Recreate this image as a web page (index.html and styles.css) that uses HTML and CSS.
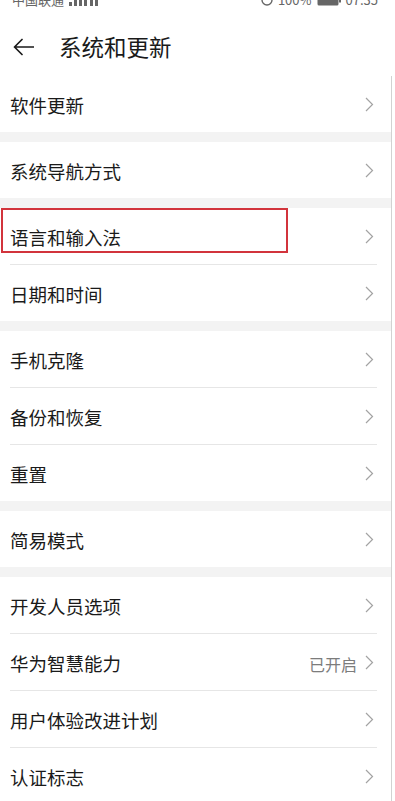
FILE: index.html
```html
<!DOCTYPE html>
<html lang="zh-CN">
<head>
<meta charset="utf-8">
<title>系统和更新</title>
<link rel="stylesheet" href="styles.css">
</head>
<body>
<div class="status">
  <div class="status-inner">
    <span class="carrier">中国联通
      <svg class="sig" width="30" height="12" viewBox="0 0 30 12"><rect x="0" y="8" width="3" height="4"/><rect x="5" y="6" width="3" height="6"/><rect x="10" y="3" width="3" height="9"/><rect x="15" y="0" width="3" height="12"/><rect x="21" y="4" width="3" height="8"/><rect x="26" y="2" width="3" height="10"/></svg>
    </span>
    <span class="sys">
      <svg class="alarm" width="12" height="12" viewBox="0 0 12 12"><circle cx="6" cy="6" r="5" fill="none" stroke="#666" stroke-width="1.4"/></svg>
      <span>100%</span>
      <svg class="batt" width="24" height="11" viewBox="0 0 24 11"><rect x="0.5" y="0.5" width="21" height="10" rx="1.5" fill="#666"/><rect x="22" y="3.5" width="2" height="4" fill="#666"/></svg>
      <span>07:35</span>
    </span>
  </div>
</div>

<header class="top">
  <svg class="back" width="21" height="18" viewBox="0 0 21 18"><path d="M9 1.5 L1.5 9 L9 16.5 M1.5 9 H20.5" fill="none" stroke="#1a1a1a" stroke-width="1.7" stroke-linecap="round" stroke-linejoin="round"/></svg>
  <h1 class="title">系统和更新</h1>
</header>

<main class="list">
  <section class="group">
    <div class="row"><span class="label">软件更新</span><svg class="chev" width="9" height="15" viewBox="0 0 9 15"><path d="M1 1 L7.5 7.5 L1 14" fill="none" stroke="#a3a3a3" stroke-width="1.2"/></svg></div>
  </section>
  <section class="group">
    <div class="row"><span class="label">系统导航方式</span><svg class="chev" width="9" height="15" viewBox="0 0 9 15"><path d="M1 1 L7.5 7.5 L1 14" fill="none" stroke="#a3a3a3" stroke-width="1.2"/></svg></div>
  </section>
  <section class="group">
    <div class="row highlighted"><span class="label">语言和输入法</span><svg class="chev" width="9" height="15" viewBox="0 0 9 15"><path d="M1 1 L7.5 7.5 L1 14" fill="none" stroke="#a3a3a3" stroke-width="1.2"/></svg><span class="mark"></span></div>
    <div class="sep"></div>
    <div class="row"><span class="label">日期和时间</span><svg class="chev" width="9" height="15" viewBox="0 0 9 15"><path d="M1 1 L7.5 7.5 L1 14" fill="none" stroke="#a3a3a3" stroke-width="1.2"/></svg></div>
  </section>
  <section class="group">
    <div class="row"><span class="label">手机克隆</span><svg class="chev" width="9" height="15" viewBox="0 0 9 15"><path d="M1 1 L7.5 7.5 L1 14" fill="none" stroke="#a3a3a3" stroke-width="1.2"/></svg></div>
    <div class="sep"></div>
    <div class="row"><span class="label">备份和恢复</span><svg class="chev" width="9" height="15" viewBox="0 0 9 15"><path d="M1 1 L7.5 7.5 L1 14" fill="none" stroke="#a3a3a3" stroke-width="1.2"/></svg></div>
    <div class="sep"></div>
    <div class="row"><span class="label">重置</span><svg class="chev" width="9" height="15" viewBox="0 0 9 15"><path d="M1 1 L7.5 7.5 L1 14" fill="none" stroke="#a3a3a3" stroke-width="1.2"/></svg></div>
  </section>
  <section class="group">
    <div class="row"><span class="label">简易模式</span><svg class="chev" width="9" height="15" viewBox="0 0 9 15"><path d="M1 1 L7.5 7.5 L1 14" fill="none" stroke="#a3a3a3" stroke-width="1.2"/></svg></div>
  </section>
  <section class="group">
    <div class="row"><span class="label">开发人员选项</span><svg class="chev" width="9" height="15" viewBox="0 0 9 15"><path d="M1 1 L7.5 7.5 L1 14" fill="none" stroke="#a3a3a3" stroke-width="1.2"/></svg></div>
    <div class="sep"></div>
    <div class="row"><span class="label">华为智慧能力</span><span class="value">已开启</span><svg class="chev" width="9" height="15" viewBox="0 0 9 15"><path d="M1 1 L7.5 7.5 L1 14" fill="none" stroke="#a3a3a3" stroke-width="1.2"/></svg></div>
    <div class="sep"></div>
    <div class="row"><span class="label">用户体验改进计划</span><svg class="chev" width="9" height="15" viewBox="0 0 9 15"><path d="M1 1 L7.5 7.5 L1 14" fill="none" stroke="#a3a3a3" stroke-width="1.2"/></svg></div>
    <div class="sep"></div>
    <div class="row"><span class="label">认证标志</span><svg class="chev" width="9" height="15" viewBox="0 0 9 15"><path d="M1 1 L7.5 7.5 L1 14" fill="none" stroke="#a3a3a3" stroke-width="1.2"/></svg></div>
  </section>
</main>
</body>
</html>
```

FILE: styles.css
```css
html, body {
  margin: 0;
  padding: 0;
  background: #ffffff;
}
body {
  width: 395px;
  height: 801px;
  overflow: hidden;
  font-family: "Noto Sans CJK SC", "Noto Sans", sans-serif;
  color: #1a1a1a;
}

.status {
  height: 9px;
  overflow: hidden;
}
.status-inner {
  margin-top: -9px;
  height: 18px;
  display: flex;
  justify-content: space-between;
  align-items: center;
  padding: 0 17px 0 12px;
  font-size: 13px;
  line-height: 18px;
  color: #666;
}
.carrier, .sys {
  display: flex;
  align-items: center;
  gap: 5px;
}
.sig rect { fill: #666; }

.top {
  height: 59px;
  padding: 8px 0 0 13px;
  display: flex;
  align-items: center;
  gap: 25px;
}
.back { flex: none; }
.title {
  margin: 0;
  font-size: 22.5px;
  font-weight: 400;
  line-height: 1;
  color: #1a1a1a;
}

.list {
  width: 391px;
  height: 725px;
  border-right: 1px solid #d2d2d2;
  display: flex;
  flex-direction: column;
  gap: 10px;
  background: #f3f3f3;
}
.group {
  background: #ffffff;
}
.row {
  position: relative;
  height: 56px;
  box-sizing: border-box;
  padding: 3px 17px 0 10px;
  display: flex;
  align-items: center;
}
.label {
  flex: 1;
  font-size: 18.5px;
  line-height: 1;
  color: #1a1a1a;
}
.value {
  font-size: 16px;
  line-height: 1;
  color: #7c7c7c;
  margin-right: 8px;
}
.chev {
  flex: none;
  margin-top: -3px;
}
.sep {
  height: 1px;
  margin: 0 14px 0 10px;
  background: #e6e6e6;
}
.mark {
  position: absolute;
  left: 1px;
  top: 0;
  width: 287px;
  height: 45px;
  box-sizing: border-box;
  border: 2.5px solid #d2343c;
}
```
